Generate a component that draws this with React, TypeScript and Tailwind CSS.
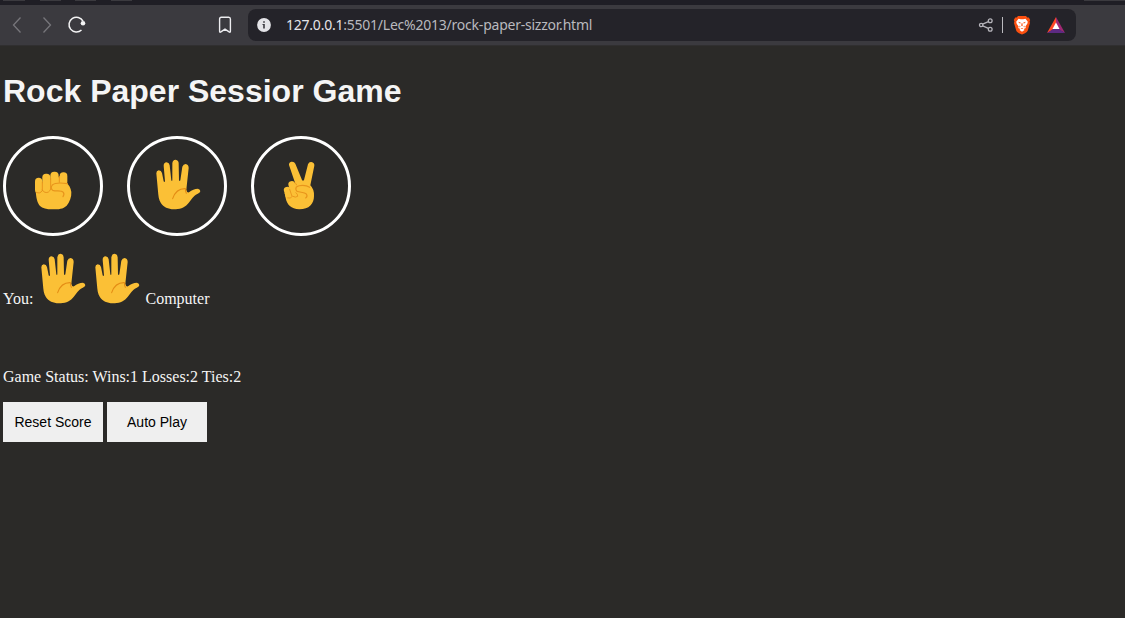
import React from "react";

function Rock() {
  return (
    <svg viewBox="69 78 180 180" className="h-[60px] w-[60px]" fill="#fbc036">
      <path d="M107 180C108 203 112 219 120 228C127 235 140 238 157 238C177 238 189 237 200 227C209 216 215 201 214 186C212 173 207 164 199 159H150L128 183Z" />
      <rect x="179" y="127" width="23" height="40" rx="11" />
      <rect x="151" y="125" width="25" height="42" rx="12" />
      <rect x="127" y="131" width="24" height="57" rx="11" />
      <rect x="105" y="143" width="22" height="47" rx="11" />
      <path d="M125 160h5v20h-5zM149 150h5v20h-5zM174 142h7v20h-7z" />
      <g fill="none" stroke="#e8951c" strokeWidth="3" strokeLinecap="round">
        <path d="M127 156V181Q121 193 109 187M152 145V177Q147 190 135 187Q129 185 127 180M178 139V157" />
        <path strokeWidth="3.6" d="M202 161C183 158 164 159 157 165Q150 174 158 181C170 185 184 180 190 187Q194 192 189 200" />
      </g>
    </svg>
  );
}

function PaperShape() {
  return (
    <>
      <path
        fill="#fbc036"
        d="M109 130Q109 122 116 121Q124 121 126 129L131 154Q133 158 135 154L131 107Q131 98 140 97Q148 98 149 106L154 151Q156 155 157 151L157 100Q158 90 167 89.500Q176 91 176 100L177 151Q179 155 181 151L187 110Q190 102 197 102Q206 104 206 114L199 179Q201 189 207 187C216 180 224 176 234 176Q241 178 241 184Q240 189 232 192C220 197 213 212 203 222C192 234 179 238 161 238C145 238 130 231 123 220C116 210 115 196 114 184Z"
      />
      <path d="M158 206C164 188 175 175 197 176Q195 182 199 190" fill="none" stroke="#e48c15" strokeWidth="3.2" strokeLinecap="round" />
    </>
  );
}

function Paper() {
  return (
    <svg viewBox="81 78 180 180" className="h-[60px] w-[60px]">
      <PaperShape />
    </svg>
  );
}

function ResultHand() {
  return (
    <svg viewBox="90 78 162 180" className="h-[60px] w-[54px]">
      <PaperShape />
    </svg>
  );
}

function Scissors() {
  return (
    <svg viewBox="78 78 180 180" className="h-[60px] w-[60px]" fill="#fbc036">
      <path d="M132 105Q131 97 139 95Q148 94 151 101L171 150Q174 155 177 150L189 103Q192 95 199 96Q209 98 208 107L196 166Q208 178 207 198C207 221 193 238 163 238C138 237 126 224 122 204L119 190L150 158Z" />
      <rect x="119" y="170" width="20" height="38" rx="10" transform="rotate(-16 129 189)" />
      <rect x="134" y="153" width="20" height="48" rx="10" transform="rotate(-16 144 177)" />
      <g fill="none" stroke="#e8951c" strokeWidth="2.8" strokeLinecap="round">
        <path d="M134 178L141 199Q139 207 128 204M149 157Q153 161 155 165M153 188Q159 193 158 199Q152 204 143 199" />
        <path strokeWidth="3.4" d="M194 172C182 164 163 165 154 171Q150 178 156 184C165 188 178 186 184 192Q189 199 182 204" />
      </g>
    </svg>
  );
}

function BraveLogo() {
  return (
    <svg viewBox="0 0 18 20" className="h-5 w-[18px]">
      <path fill="#fb5010" d="M5 1h8l1.300 1.600 1.500-.2L17.200 5l-.6 1.400.4 1.500-2.300 7.800Q14.200 17 12 18.200L9 19.600 6 18.200Q3.800 17 3.300 15.700L1 7.900l.4-1.500L.8 5l1.400-2.600 1.500.2z" />
      <path fill="#fff" d="M5.500 3.800L7.800 4.300h2.400l2.300-.5 2.300 3-.5 2-1.900 2.700.4 1.500-2.100 1.100.8 1L9 16.800l-2.500-1.700.8-1-2.100-1.100.4-1.500-1.900-2.700-.5-2z" />
      <path fill="#fb5010" d="M5 6.800l2.700.6-.6 1.400zM13 6.800l-2.700.6.6 1.400zM8.500 8.200h1l.2 2.600-.7.500-.7-.5zM6.300 10.500l1.300 1.300-.9.7zM11.700 10.500l-1.300 1.300.9.7zM7.600 13.600L9 12.900l1.400.7L9 14.100z" />
    </svg>
  );
}

function Toolbar() {
  return (
    <>
      <div className="flex h-[5px] items-start bg-[#1f1e25]">
        <div className="ml-[3px] h-px w-[22px] bg-[#3b3a3f]" />
        <div className="ml-[15px] h-px w-[21px] bg-[#3b3a3f]" />
        <div className="ml-[14px] h-px w-[21px] bg-[#3b3a3f]" />
        <div className="ml-[15px] h-px w-[21px] bg-[#3b3a3f]" />
        <div className="ml-auto h-px w-[41px] bg-[#3b3a3f]" />
      </div>
      <header className="flex h-10 items-center bg-[#3b3a3f]">
        <svg viewBox="0 0 90 40" className="h-10 w-[90px] shrink-0" fill="none">
          <path d="M20.500 12.500L13.500 20l7 7.500M43.500 12.500l7 7.500-7 7.500" stroke="#77767b" strokeWidth="1.3" />
          <path d="M83 16.200A7.400 7.400 0 1 0 81.500 25" stroke="#f4f4f5" strokeWidth="1.5" />
          <circle cx="83" cy="18.200" r="2.300" fill="#f4f4f5" />
        </svg>
        <svg viewBox="0 0 14 18" className="ml-[128px] h-[18px] w-[14px] shrink-0" fill="none">
          <path d="M1.600 3Q1.600 1.200 3.300 1.200h7.400q1.700 0 1.700 1.800v12.200q0 1.500-1.300.7L7 13.100l-4.100 2.800q-1.300.8-1.300-.7z" stroke="#ededf0" strokeWidth="1.4" />
        </svg>
        <div className="ml-4 flex h-8 w-[828px] items-center rounded-lg bg-[#242329] pl-[9px]">
          <svg viewBox="0 0 14 14" className="h-[14px] w-[14px]">
            <circle cx="7" cy="7" r="6.900" fill="#e4e4e8" />
            <path d="M6.200 3.300h1.600v1.500H6.200zM5.500 6h2.300v4.600H6.200V7.100h-.7z" fill="#3a393f" />
          </svg>
          <span className="ml-[15px] whitespace-nowrap font-['Noto_Sans',sans-serif] text-[14px] leading-5 tracking-[-0.23px] text-[#b9b9be]">
            <span className="text-[#e4e4e8]">127.0.0.1</span>:5501/Lec%2013/rock-paper-sizzor.html
          </span>
          <div className="ml-auto mr-[11px] flex items-center">
            <svg viewBox="0 0 16 16" className="h-4 w-4" fill="none" stroke="#b5b4ba" strokeWidth="1.3">
              <path d="M4.700 7.200l5.700-2.500M4.700 8.800l5.700 2.500" />
              <circle cx="3.200" cy="8" r="1.700" />
              <circle cx="12.200" cy="3.800" r="1.900" />
              <circle cx="12.200" cy="12.200" r="1.900" />
            </svg>
            <div className="ml-2 h-4 w-px bg-[#bbbabf]" />
            <div className="ml-[10px]">
              <BraveLogo />
            </div>
            <svg viewBox="0 0 18 16" className="ml-4 h-4 w-[18px]">
              <path d="M9 0L0 16l9-5z" fill="#ff4726" />
              <path d="M9 0l9 16-9-5z" fill="#a02873" />
              <path d="M0 16h18l-9-6z" fill="#5d2a83" />
              <path d="M9 5.500L5.500 12h7z" fill="#fff" />
            </svg>
          </div>
        </div>
      </header>
    </>
  );
}

function Choice({ children }: { children: React.ReactNode }) {
  return (
    <button className="flex h-[100px] w-[100px] items-center justify-center rounded-full border-[3px] border-white">
      {children}
    </button>
  );
}

export default function App() {
  return (
    <div className="h-[618px] overflow-hidden bg-[#2b2a28] font-['Liberation_Serif',serif] text-base leading-[18px] text-[#f5f5f5]">
      <Toolbar />
      <main className="border-t border-[#302f30] pl-[3px]">
        <h1 className="mt-[27px] font-['Liberation_Sans',sans-serif] text-[32px] font-bold leading-[37px]">Rock Paper Sessior Game</h1>
        <div className="mt-[26px] flex gap-6">
          <Choice><Rock /></Choice>
          <Choice><Paper /></Choice>
          <Choice><Scissors /></Choice>
        </div>
        <div className="mt-[14px] flex h-[60px] items-end">
          <span className="mb-[2px] w-8">You:</span>
          <ResultHand />
          <ResultHand />
          <span className="mb-[2px] ml-[2.5px]">Computer</span>
        </div>
        <p className="mt-[58px]">Game Status: Wins:1 Losses:2 Ties:2</p>
        <div className="mt-4 flex gap-1 font-['Liberation_Sans',sans-serif] text-sm text-black">
          <button className="h-10 w-[100px] bg-[#efefef]">Reset Score</button>
          <button className="h-10 w-[100px] bg-[#efefef]">Auto Play</button>
        </div>
      </main>
    </div>
  );
}
